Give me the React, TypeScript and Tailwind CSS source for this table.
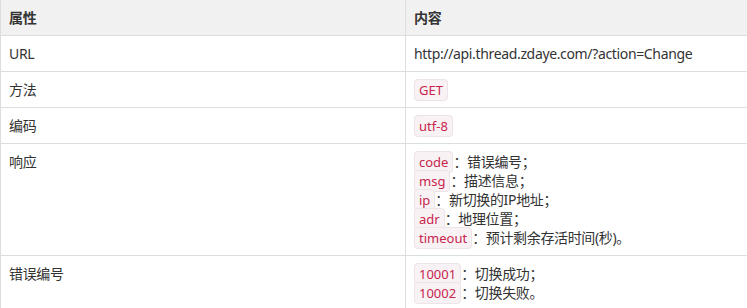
import React from "react";

const font = {
  fontFamily:
    '"Noto Sans", "Noto Sans CJK SC", "Liberation Sans", sans-serif',
};

function Code({ children }: { children: React.ReactNode }) {
  return (
    <span className="rounded-[4px] border border-[#ece4e7] bg-[#f9f2f4] px-[4px] py-[1px] text-[13px] leading-none tracking-normal text-[#c7254e]">
      {children}
    </span>
  );
}

function Row({
  label,
  children,
  head = false,
}: {
  label: string;
  children: React.ReactNode;
  head?: boolean;
}) {
  return (
    <div
      className={`flex border-b border-[#dddddd] ${head ? "bg-[#f1f1f1] font-bold" : ""}`}
    >
      <div className="w-[405px] shrink-0 border-r border-[#dddddd] px-2 py-2 leading-[19px]">
        {label}
      </div>
      <div className="flex-1 px-2 py-2 leading-[19px]">{children}</div>
    </div>
  );
}

export default function App() {
  return (
    <div
      className="w-[747px] h-[308px] overflow-hidden bg-white text-[14px] tracking-[-0.35px] text-[#333333]"
      style={font}
    >
      <div className="border-l border-[#dddddd]">
        <Row label="属性" head>
          内容
        </Row>
        <Row label="URL">http://api.thread.zdaye.com/?action=Change</Row>
        <Row label="方法">
          <Code>GET</Code>
        </Row>
        <Row label="编码">
          <Code>utf-8</Code>
        </Row>
        <Row label="响应">
          <div>
            <Code>code</Code>：错误编号；
          </div>
          <div>
            <Code>msg</Code>：描述信息；
          </div>
          <div>
            <Code>ip</Code>：新切换的IP地址；
          </div>
          <div>
            <Code>adr</Code>：地理位置；
          </div>
          <div>
            <Code>timeout</Code>：预计剩余存活时间(秒)。
          </div>
        </Row>
        <Row label="错误编号">
          <div>
            <Code>10001</Code>：切换成功；
          </div>
          <div>
            <Code>10002</Code>：切换失败。
          </div>
        </Row>
      </div>
    </div>
  );
}
